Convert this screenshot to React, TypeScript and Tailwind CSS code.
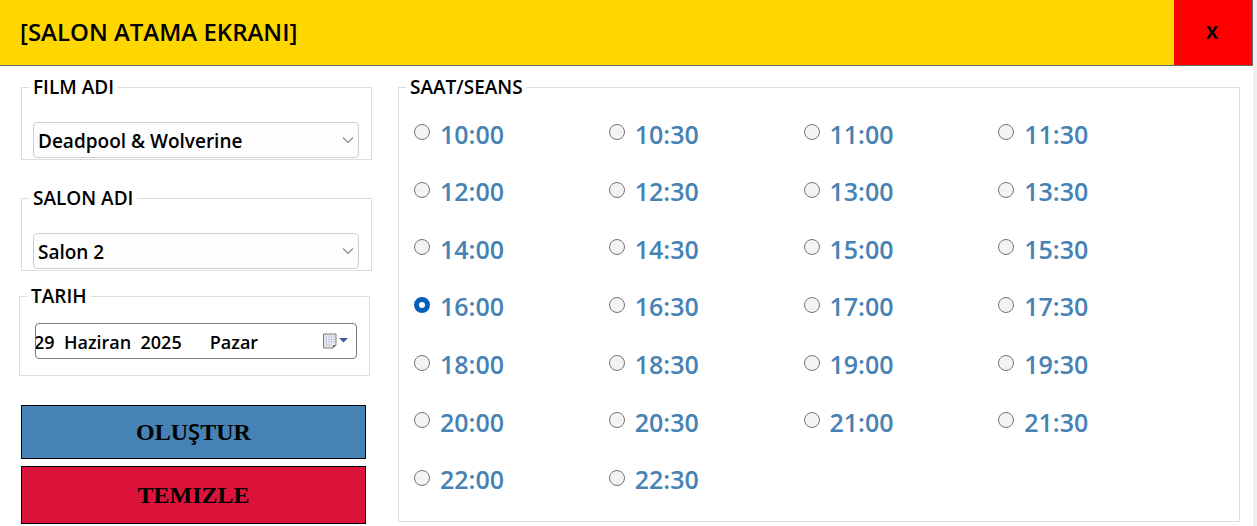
import { useState, type ReactNode } from "react";

const SESSIONS = [
  "10:00", "10:30", "11:00", "11:30",
  "12:00", "12:30", "13:00", "13:30",
  "14:00", "14:30", "15:00", "15:30",
  "16:00", "16:30", "17:00", "17:30",
  "18:00", "18:30", "19:00", "19:30",
  "20:00", "20:30", "21:00", "21:30",
  "22:00", "22:30",
];

function Group({ title, className, children }: { title: string; className: string; children: ReactNode }) {
  return (
    <fieldset className={`min-w-0 border border-[#dcdcdc] ${className}`}>
      <legend className="ml-[7px] px-1 text-[19px] leading-5 font-semibold">{title}</legend>
      {children}
    </fieldset>
  );
}

function Picker({ label, options }: { label: string; options: string[] }) {
  return (
    <div className="relative mr-3 ml-[11px] mt-[25px]">
      <select
        aria-label={label}
        className="block h-9 w-full appearance-none rounded-sm border border-[#d0d0d0] bg-[#fdfdfd] pt-0.5 pl-1 text-[19px] leading-6 font-semibold"
      >
        {options.map((o) => (
          <option key={o}>{o}</option>
        ))}
      </select>
      <svg className="pointer-events-none absolute top-3.5 right-[5px] h-2 w-3" viewBox="0 0 12 8" fill="none" stroke="#8a8a8a" strokeWidth="1.2">
        <path d="M1 1.5 L6 6.5 L11 1.5" />
      </svg>
    </div>
  );
}

export default function App() {
  const [session, setSession] = useState("16:00");
  const [date, setDate] = useState("29  Haziran  2025      Pazar");

  return (
    <div className="min-h-screen bg-[#f0f0f0] pr-1 font-['Open_Sans','Noto_Sans',sans-serif] text-black">
      <div className="bg-white">
        <header className="flex h-[66px] items-stretch border-r border-b border-[#6b6b6b] bg-[#ffd700]">
          <h1 className="flex flex-1 items-center pb-0.5 pl-5 text-2xl leading-7 font-semibold">[SALON ATAMA EKRANI]</h1>
          <button type="button" className="w-[78px] bg-[#ff0000] pr-0.5 pb-0.5 text-lg font-bold">
            X
          </button>
        </header>

        <main className="flex gap-[26px] pt-[11px] pr-[13px] pb-0.5 pl-[21px]">
          <div className="w-[351px] shrink-0">
            <Group title="FILM ADI" className="pb-px">
              <Picker label="FILM ADI" options={["Deadpool & Wolverine"]} />
            </Group>
            <Group title="SALON ADI" className="mt-7 pb-px">
              <Picker label="SALON ADI" options={["Salon 2", "Salon 1", "Salon 3"]} />
            </Group>
            <Group title="TARIH" className="mt-[15px] mr-0.5 -ml-0.5 pb-4">
              <div className="mt-[17px] mr-3 ml-[15px] flex h-9 items-center rounded-sm border border-[#7a7a7a] pr-2">
                <input
                  aria-label="TARIH"
                  value={date}
                  onChange={(e) => setDate(e.target.value)}
                  className="min-w-0 flex-1 -indent-0.5 pt-0.5 text-lg leading-6 font-semibold outline-none"
                />
                <button type="button" aria-label="Takvim">
                  <svg className="h-4 w-[26px]" viewBox="0 0 26 16">
                    <path d="M1.5 1H14V12L11 15H1.5Z" fill="#e6e6ea" stroke="#7f7a7a" />
                    <path d="M4 3.5H12V12H4Z" fill="#fff" />
                    <path d="M4 4H12M4 6.5H12M4 9H12M4.5 3.5V12M7 3.5V12M9.5 3.5V12M12 3.5V10M4 12H10" fill="none" stroke="#b4bfd4" strokeWidth="0.8" />
                    <path d="M14 12H11V15Z" fill="#6b6666" />
                    <path d="M17 5H26L21.5 9.5Z" fill="#3f5b94" />
                  </svg>
                </button>
              </div>
            </Group>
            <div className="mt-[29px] mr-1.5 flex flex-col gap-[7px] font-['Liberation_Serif',serif] text-2xl leading-8 font-bold">
              <button type="button" className="h-[54px] border border-black bg-[#4682b4] pb-0.5">
                OLU<span className="font-['Open_Sans',sans-serif] text-[22px] font-semibold">Ş</span>TUR
              </button>
              <button type="button" className="h-[58px] border border-black bg-[#dc143c]">
                TEMIZLE
              </button>
            </div>
          </div>

          <Group title="SAAT/SEANS" className="flex-1 self-start pb-[13px]">
            <div className="mt-2 grid h-[403px] grid-cols-4 grid-rows-7 pr-[46px] pl-[15px]">
              {SESSIONS.map((time) => (
                <label key={time} className="flex items-center gap-2.5 text-[25px] leading-8 font-semibold text-[#4682b4]">
                  <input
                    type="radio"
                    name="session"
                    value={time}
                    checked={session === time}
                    onChange={() => setSession(time)}
                    className="mb-[3px] size-4 appearance-none rounded-full border border-[#757575] bg-[#f3f3f3] checked:border-5 checked:border-[#005fb8] checked:bg-white"
                  />
                  {time}
                </label>
              ))}
            </div>
          </Group>
        </main>
      </div>
    </div>
  );
}
